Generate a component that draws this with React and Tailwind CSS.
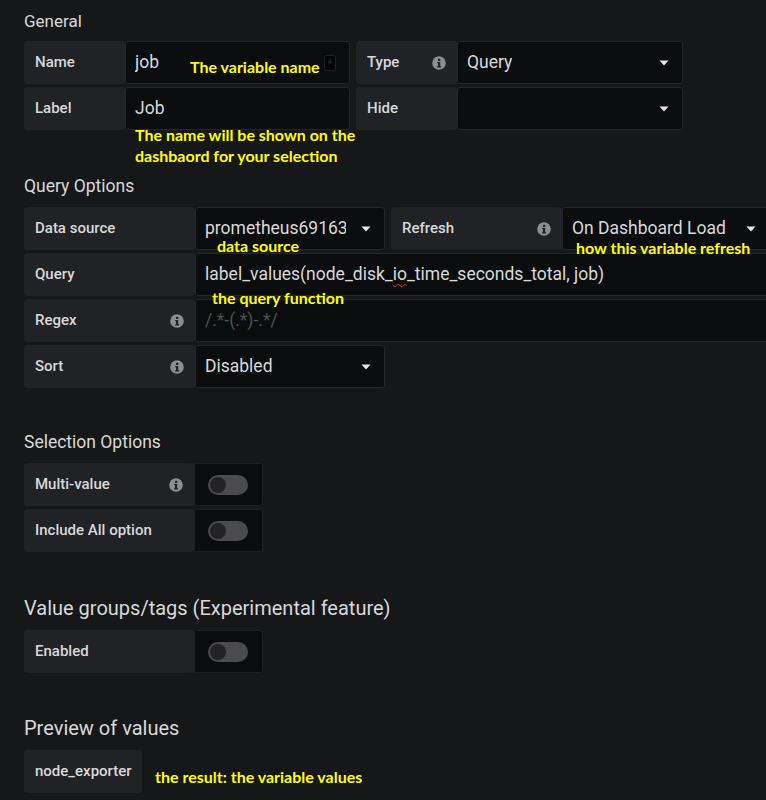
import React from "react";

const Info = () => (
  <svg width="14" height="14" viewBox="0 0 14 14" className="shrink-0">
    <circle cx="7" cy="7" r="6.8" fill="#8e8e8e" />
    <rect x="6" y="2.8" width="2.2" height="2.1" rx="0.4" fill="#202226" />
    <path d="M5.2 6.1h3v4.2h0.9v1.2H5.1v-1.2h0.9V7.3h-0.8z" fill="#202226" />
  </svg>
);

const Caret = () => (
  <svg width="10" height="6" viewBox="0 0 10 6" className="shrink-0">
    <path d="M0.5 0.5h9L5 5.5z" fill="#e6e6e6" />
  </svg>
);

const KeyIcon = () => (
  <svg width="12" height="16" viewBox="0 0 12 16" className="shrink-0">
    <rect x="0.5" y="0.5" width="11" height="15" rx="1.5" fill="#050506" stroke="#1f2022" />
    <path d="M6 3v5M4 6l2 2.2L8 6" stroke="#1d1e20" strokeWidth="1.4" fill="none" />
  </svg>
);

const Label = ({ children, w, info }) => (
  <div
    className={`${w} h-full shrink-0 bg-[#202226] rounded-[3px] flex items-center justify-between pl-[11px] pr-[11px] text-[15px] font-medium text-[#d8d9da]`}
  >
    <span>{children}</span>
    {info ? <Info /> : null}
  </div>
);

const Input = ({ w, children, caret, extra, textW = "" }) => (
  <div
    className={`${w} h-full shrink-0 bg-[#0b0c0e] border border-[#262628] rounded-[3px] flex items-center justify-between pl-[9px] pr-[13px] text-[17.5px] text-[#d8d9da]`}
  >
    <span className={`whitespace-nowrap overflow-hidden ${textW}`}>{children}</span>
    {caret ? <Caret /> : null}
    {extra}
  </div>
);

const Switch = () => (
  <div className="w-[69px] h-full shrink-0 bg-[#0b0c0e] border border-[#1e1f22] rounded-r-[3px] flex items-center pl-[13px]">
    <div className="w-[40px] h-[20px] rounded-full bg-[#4b4b4d] flex items-center pl-[2px]">
      <div className="w-[16px] h-[16px] rounded-full bg-[#232325]" />
    </div>
  </div>
);

const Row = ({ children }) => <div className="flex h-[43px] items-stretch">{children}</div>;

const Note = ({ className, children }) => (
  <div
    className={`absolute font-['Lato',sans-serif] font-bold text-[16px] leading-[21px] text-[#ffff00] whitespace-nowrap ${className}`}
  >
    {children}
  </div>
);

export default function App() {
  return (
    <div className="relative w-[766px] h-[800px] overflow-hidden bg-[#161719] font-['Roboto','Liberation_Sans',sans-serif] pl-[24px] pt-[11px]">
      {/* General */}
      <div className="text-[17px] leading-[20px] text-[#d8d9da] mb-[10px]">General</div>
      <div className="flex flex-col gap-[3px]">
        <Row>
          <Label w="w-[101px]">Name</Label>
          <Input w="w-[225px]" extra={<KeyIcon />}>
            job
          </Input>
          <div className="w-[6px] shrink-0" />
          <Label w="w-[101px]" info>
            Type
          </Label>
          <Input w="w-[226px]" caret>
            Query
          </Input>
        </Row>
        <Row>
          <Label w="w-[101px]">Label</Label>
          <Input w="w-[225px]">Job</Input>
          <div className="w-[6px] shrink-0" />
          <Label w="w-[101px]">Hide</Label>
          <Input w="w-[226px]" caret>
            {""}
          </Input>
        </Row>
      </div>

      {/* Query Options */}
      <div className="text-[17.5px] leading-[20px] text-[#d8d9da] mt-[46px] mb-[11px]">Query Options</div>
      <div className="flex flex-col gap-[3px]">
        <Row>
          <Label w="w-[171px]">Data source</Label>
          <Input w="w-[190px]" caret textW="w-[141px]">
            prometheus69163
          </Input>
          <div className="w-[6px] shrink-0" />
          <Label w="w-[171px]" info>
            Refresh
          </Label>
          <Input w="w-[208px]" caret>
            On Dashboard Load
          </Input>
        </Row>
        <Row>
          <Label w="w-[171px]">Query</Label>
          <Input w="w-[620px]">
            label_values(node_disk_
            <span className="underline decoration-wavy decoration-[#e0201d] decoration-1 underline-offset-[3px]">io</span>
            _time_seconds_total, job)
          </Input>
        </Row>
        <Row>
          <Label w="w-[171px]" info>
            Regex
          </Label>
          <Input w="w-[620px]">
            <span className="text-[#4f5054]">/.*-(.*)-.*/</span>
          </Input>
        </Row>
        <Row>
          <Label w="w-[171px]" info>
            Sort
          </Label>
          <Input w="w-[190px]" caret>
            Disabled
          </Input>
        </Row>
      </div>

      {/* Selection Options */}
      <div className="text-[17.5px] leading-[20px] text-[#d8d9da] mt-[44px] mb-[11px]">Selection Options</div>
      <div className="flex flex-col gap-[3px]">
        <Row>
          <Label w="w-[170px]" info>
            Multi-value
          </Label>
          <Switch />
        </Row>
        <Row>
          <Label w="w-[170px]">Include All option</Label>
          <Switch />
        </Row>
      </div>

      {/* Value groups */}
      <div className="text-[20px] leading-[26px] text-[#d8d9da] mt-[43px] mb-[9px]">
        Value groups/tags (Experimental feature)
      </div>
      <Row>
        <Label w="w-[170px]">Enabled</Label>
        <Switch />
      </Row>

      {/* Preview */}
      <div className="text-[20px] leading-[26px] text-[#d8d9da] mt-[42px] mb-[9px]">Preview of values</div>
      <Row>
        <Label w="w-[118px]">node_exporter</Label>
      </Row>

      {/* Annotations */}
      <Note className="left-[190px] top-[56px]">The variable name</Note>
      <Note className="left-[135px] top-[124px]">
        The name will be shown on the
        <br />
        dashbaord for your selection
      </Note>
      <Note className="left-[217px] top-[235px]">data source</Note>
      <Note className="left-[576px] top-[237px]">how this variable refresh</Note>
      <Note className="left-[212px] top-[287px]">the query function</Note>
      <Note className="left-[155px] top-[766px]">the result: the variable values</Note>
    </div>
  );
}
